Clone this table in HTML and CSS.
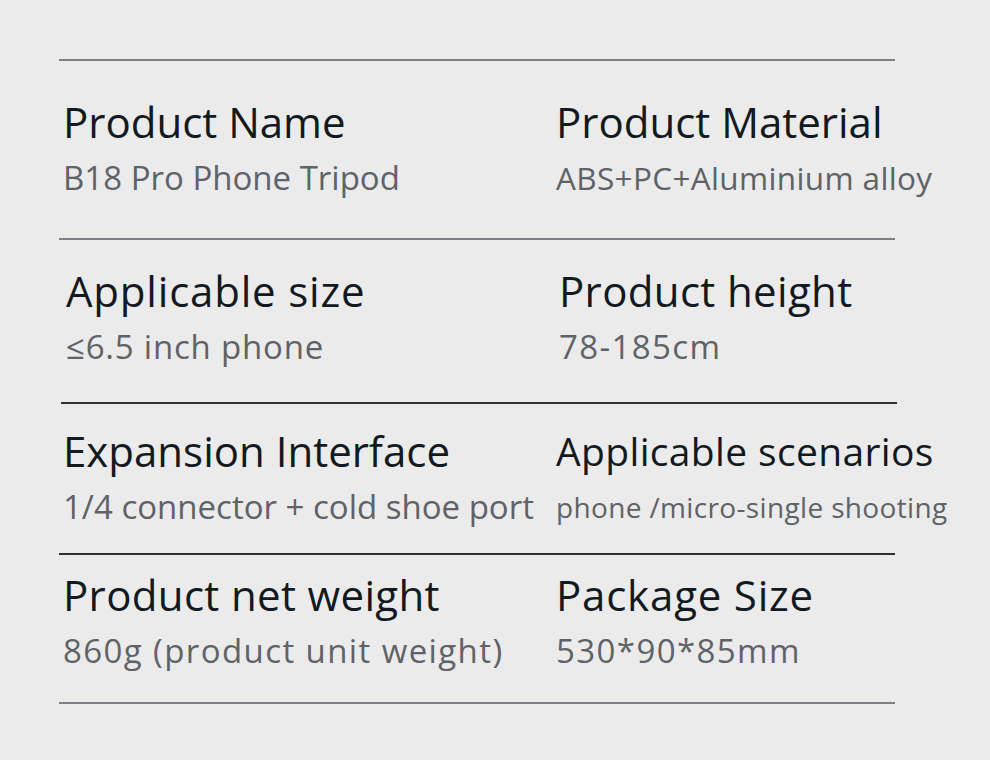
FILE: index.html
```html
<!DOCTYPE html>
<html lang="en">
<head>
<meta charset="utf-8">
<title>B18 Pro Phone Tripod – Specifications</title>
<link rel="stylesheet" href="styles.css">
</head>
<body>
<main class="specs">
  <section class="row row-1 line-light">
    <div class="cell">
      <h3 class="label">Product Name</h3>
      <p class="value">B18 Pro Phone Tripod</p>
    </div>
    <div class="cell">
      <h3 class="label">Product Material</h3>
      <p class="value value-sm track-1">ABS+PC+Aluminium alloy</p>
    </div>
  </section>
  <section class="row row-2 line-light">
    <div class="cell">
      <h3 class="label track-2">Applicable size</h3>
      <p class="value track-2">≤6.5 inch phone</p>
    </div>
    <div class="cell">
      <h3 class="label track-1">Product height</h3>
      <p class="value track-3">78-185cm</p>
    </div>
  </section>
  <section class="row row-3 line-dark">
    <div class="cell">
      <h3 class="label">Expansion Interface</h3>
      <p class="value">1/4 connector + cold shoe port</p>
    </div>
    <div class="cell">
      <h3 class="label label-sm track-1">Applicable scenarios</h3>
      <p class="value value-xs track-1">phone /micro-single shooting</p>
    </div>
  </section>
  <section class="row row-4 line-dark last">
    <div class="cell">
      <h3 class="label track-1">Product net weight</h3>
      <p class="value track-3">860g (product unit weight)</p>
    </div>
    <div class="cell">
      <h3 class="label track-2">Package Size</h3>
      <p class="value track-3">530*90*85mm</p>
    </div>
  </section>
</main>
</body>
</html>
```
FILE: styles.css
```css
html, body {
  margin: 0;
  padding: 0;
  background: #ebebeb;
}

body {
  font-family: "Open Sans", "Liberation Sans", sans-serif;
  width: 990px;
  height: 760px;
  overflow: hidden;
}

.specs {
  margin-left: 59px;
  width: 836px;
  padding-top: 59px;
}

.row {
  display: grid;
  grid-template-columns: 493px 1fr;
  border-top: 2px solid #7c8085;
}

.line-light { border-top-color: #7c8085; }
.line-dark { border-top-color: #2c3136; }

.row.last {
  border-bottom: 2px solid #7c8085;
}

.row-1 { padding: 33px 0 38px; }
.row-2 { padding: 23px 0 33px; }
.row-3 { padding: 19px 0 24px; }
.row-4 { padding: 12px 0 29px; }

.cell {
  display: flex;
  flex-direction: column;
  gap: 6px;
  padding-left: 4px;
  white-space: nowrap;
}

/* Row 2 text sits a little further right */
.row-2 .cell { padding-left: 7px; }

/* Row 3 divider is offset 2px to the right; its text is not */
.row-3 {
  margin-left: 2px;
  margin-right: -2px;
}
.row-3 .cell { padding-left: 2px; }

.label {
  margin: 0;
  font-size: 42px;
  line-height: 56px;
  font-weight: 400;
  color: #121921;
}

.label-sm {
  font-size: 39px;
}

.value {
  margin: 0;
  font-size: 33px;
  line-height: 44px;
  font-weight: 400;
  color: #5f6267;
}

.value-sm {
  font-size: 31.5px;
}

.value-xs {
  font-size: 28px;
}

.track-1 { letter-spacing: 0.35px; }
.track-2 { letter-spacing: 0.8px; }
.track-3 { letter-spacing: 1.4px; }
```
